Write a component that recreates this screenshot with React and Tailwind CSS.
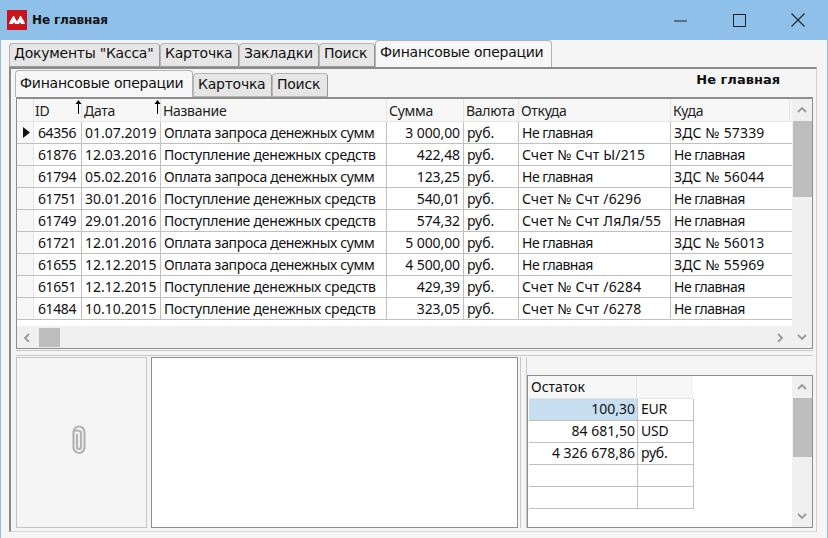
const rows = [
  ["64356", "01.07.2019", "Оплата запроса денежных сумм", "3 000,00", "руб.", "Не главная", "ЗДС № 57339"],
  ["61876", "12.03.2016", "Поступление денежных средств", "422,48", "руб.", "Счет № Счт Ы/215", "Не главная"],
  ["61794", "05.02.2016", "Оплата запроса денежных сумм", "123,25", "руб.", "Не главная", "ЗДС № 56044"],
  ["61751", "30.01.2016", "Поступление денежных средств", "540,01", "руб.", "Счет № Счт /6296", "Не главная"],
  ["61749", "29.01.2016", "Поступление денежных средств", "574,32", "руб.", "Счет № Счт ЛяЛя/55", "Не главная"],
  ["61721", "12.01.2016", "Оплата запроса денежных сумм", "5 000,00", "руб.", "Не главная", "ЗДС № 56013"],
  ["61655", "12.12.2015", "Оплата запроса денежных сумм", "4 500,00", "руб.", "Не главная", "ЗДС № 55969"],
  ["61651", "12.12.2015", "Поступление денежных средств", "429,39", "руб.", "Счет № Счт /6284", "Не главная"],
  ["61484", "10.10.2015", "Поступление денежных средств", "323,05", "руб.", "Счет № Счт /6278", "Не главная"],
];

const Chevron = ({ dir }) => {
  const d = { up: "M1 6 L5 2 L9 6", down: "M1 2 L5 6 L9 2", left: "M6 1 L2 5 L6 9", right: "M2 1 L6 5 L2 9" }[dir];
  return (
    <svg width="10" height="10" viewBox="0 0 10 8" className="block" fill="none" stroke="#9a9a9a" strokeWidth="1.8">
      <path d={d} />
    </svg>
  );
};

const VScroll = ({ thumb }) => (
  <div className="w-[20px] h-full shrink-0 bg-[#f0f0f0] flex flex-col items-center">
    <div className="h-[22px] shrink-0 w-full flex items-center justify-center"><Chevron dir="up" /></div>
    <div className={`${thumb} w-[19px] bg-[#bdbdbd] shrink-0`} />
    <div className="flex-1" />
    <div className="h-[22px] shrink-0 w-full flex items-center justify-center"><Chevron dir="down" /></div>
  </div>
);

const Tab = ({ label, w, active, inner }) => (
  <div
    className={`${w} shrink-0 box-border rounded-t-[4px] border border-[#b4b4b4] pl-[4px] flex items-center whitespace-nowrap text-[14px] tracking-[-0.25px] font-['DejaVu_Sans',sans-serif] ${
      inner ? "pb-[3px]" : "pb-[4px]"
    } ${
      active ? "bg-[#f7f7f7] h-[27px] border-b-0 z-10" : inner ? "bg-[#e6e6e6] h-[24px] border-r-[#999]" : "bg-[#e6e6e6] h-[24px] border-r-[#999] border-b-[#999]"
    }`}
  >
    {label}
  </div>
);

const H = ({ w, children, arrow }) => (
  <div className={`${w} shrink-0 box-border border-r border-[#e4e4e4] pl-[2px] pt-[3px] relative text-[#222] tracking-[-0.3px]`}>
    {children}
    {arrow && (
      <svg width="7" height="16" viewBox="0 0 7 16" className="absolute right-[-1px] top-0">
        <path d="M3.5 1 L6.5 5 L4 5 L4 15 L3 15 L3 5 L.5 5 Z" fill="#000" />
      </svg>
    )}
  </div>
);

const C = ({ w, right, children, pl = "pl-[3px]", tr = "" }) => (
  <div
    className={`${w} ${tr} shrink-0 box-border border-r border-[#c0c0c0] overflow-hidden whitespace-nowrap pt-[2px] ${
      right ? "text-right pr-[3px]" : pl
    }`}
  >
    {children}
  </div>
);

const wordTrack = (s) => (s === "Не главная" ? "tracking-[-0.5px]" : "tracking-[0.15px]");
const nameTrack = (s) => (s.startsWith("Оплата") ? "tracking-[-0.33px]" : "tracking-[-0.22px]");

export default function App() {
  return (
    <div className="w-[828px] h-[538px] overflow-hidden bg-[#8fc0ea] flex flex-col text-[14px] leading-[18px] text-[#111] font-['Noto_Sans',sans-serif]">
      <div className="h-[40px] shrink-0 flex items-center pl-[7px]">
        <div className="w-[20px] h-[20px] bg-[#c8141c] flex items-center justify-center">
          <svg width="18" height="10" viewBox="0 0 18 10">
            <path d="M1 9 L2 6 L4 3 L5 1 L6 1 L8 5 L9 6 L10 5 L12 1 L13 1 L14 3 L16 6 L17 9 L13 9 L12 7 L11 9 L7 9 L6 7 L5 9 Z" fill="#fff" />
          </svg>
        </div>
        <span className="ml-[5px] font-bold text-[12px] tracking-[-0.15px] font-['DejaVu_Sans',sans-serif]">Не главная</span>
        <div className="flex-1" />
        <svg width="13" height="13" viewBox="0 0 13 13" className="mr-[46px]"><path d="M0 7 H13" stroke="#222" strokeWidth="1" /></svg>
        <svg width="13" height="13" viewBox="0 0 13 13" className="mr-[45px]"><rect x=".5" y=".5" width="12" height="12" fill="none" stroke="#222" /></svg>
        <svg width="14" height="14" viewBox="0 0 14 14" className="mr-[23px]"><path d="M.5 .5 L13.5 13.5 M13.5 .5 L.5 13.5" stroke="#222" strokeWidth="1.1" /></svg>
      </div>

      <div className="flex-1 mx-[1px] bg-[#f5f5f5] flex flex-col pl-[8px] pr-[10px] pb-[6px] min-h-0">
        <div className="flex items-end h-[27px] shrink-0">
          <Tab w="w-[151px]" label='Документы "Касса"' />
          <Tab w="w-[79px]" label="Карточка" />
          <Tab w="w-[80px]" label="Закладки" />
          <Tab w="w-[56px]" label="Поиск" />
          <Tab w="w-[177px]" label="Финансовые операции" active />
        </div>

        <div className="flex-1 min-h-0 box-border border-t-2 border-l-2 border-[#8a8a8a] border-r border-r-[#d0d0d0] border-b border-b-[#d8d8d8] pl-[5px] pr-[3px] flex flex-col">
          <div className="flex items-end h-[28px] shrink-0 relative -ml-[1px]">
            <Tab w="w-[178px]" label="Финансовые операции" active inner />
            <Tab w="w-[79px]" label="Карточка" inner />
            <Tab w="w-[56px]" label="Поиск" inner />
            <div className="flex-1 self-start pt-[2px] pr-[33px] text-right font-bold text-[13px] font-['DejaVu_Sans',sans-serif]">Не главная</div>
          </div>

          <div className="h-[252px] shrink-0 box-border border border-t-2 border-[#8e8e8e] bg-white flex">
            <div className="flex-1 min-w-0 flex flex-col">
              <div className="h-[23px] shrink-0 flex bg-[#f7f7f7] border-b border-[#e4e4e4]">
                <H w="w-[17px]" />
                <H w="w-[48px]" arrow><span className="-ml-[1px]">ID</span></H>
                <H w="w-[79px]" arrow>Дата</H>
                <H w="w-[226px]">Название</H>
                <H w="w-[77px]">Сумма</H>
                <H w="w-[55px]">Валюта</H>
                <H w="w-[152px]">Откуда</H>
                <H w="w-[119px]">Куда</H>
              </div>
              {rows.map((r, i) => (
                <div key={r[0]} className="h-[22px] shrink-0 flex border-b border-[#c0c0c0]">
                  <div className="w-[17px] shrink-0 bg-[#f7f7f7] border-r border-[#e4e4e4] flex items-center pl-[6px]">
                    {i === 0 && (
                      <svg width="7" height="11" viewBox="0 0 7 11"><path d="M0 0 L7 5.5 L0 11 Z" fill="#111" /></svg>
                    )}
                  </div>
                  <C w="w-[48px]" pl="pl-[4px]" tr="tracking-[-0.4px]">{r[0]}</C>
                  <C w="w-[79px]">{r[1]}</C>
                  <C w="w-[226px]" tr={nameTrack(r[2])}>{r[2]}</C>
                  <C w="w-[77px]" right tr="tracking-[-0.1px]">{r[3]}</C>
                  <C w="w-[55px]">{r[4]}</C>
                  <C w="w-[152px]" tr={wordTrack(r[5])}>{r[5]}</C>
                  <div className={`${wordTrack(r[6])} w-[119px] shrink-0 pl-[3px] pt-[2px] whitespace-nowrap`}>{r[6]}</div>
                </div>
              ))}
              <div className="flex-1" />
              <div className="h-[22px] shrink-0 bg-[#f0f0f0] flex items-center">
                <div className="w-[22px] shrink-0 flex justify-center"><Chevron dir="left" /></div>
                <div className="w-[21px] h-[19px] bg-[#bdbdbd] shrink-0" />
                <div className="flex-1" />
                <div className="w-[22px] shrink-0 flex justify-center"><Chevron dir="right" /></div>
              </div>
            </div>
            <VScroll thumb="h-[76px]" />
          </div>

          <div className="h-[6px] shrink-0 box-border border-t border-b border-[#c8c8c8] my-[1px]" />

          <div className="flex-1 min-h-0 flex pb-[3px]">
            <div className="w-[131px] shrink-0 box-border border border-[#c4c4c4] flex items-center justify-center pb-[6px] pr-[6px]">
              <svg width="16" height="30" viewBox="0 0 16 30" fill="none" stroke="#b4b4b4" strokeWidth="2.2" className="blur-[0.4px]">
                <path d="M6 9 V22 A2 2 0 0 0 10 22 V7 A5.5 5.5 0 0 0 2.5 7 V22 A5.5 6 0 0 0 13.5 22 V7 A5.5 5.5 0 0 0 2.5 7" />
              </svg>
            </div>
            <div className="w-[367px] shrink-0 ml-[4px] box-border border border-[#8e8e8e] bg-white" />
            <div className="w-[7px] shrink-0 ml-[2px] box-border border-l border-r border-[#c8c8c8]" />
            <div className="flex-1 min-w-0 flex flex-col">
              <div className="h-[18px] shrink-0" />
              <div className="flex-1 min-h-0 box-border border border-[#8e8e8e] bg-white flex">
                <div className="flex-1 min-w-0 pl-[1px]">
                  <div className="h-[23px] flex w-[164px] bg-[#f7f7f7] border-b border-[#e4e4e4]">
                    <div className="w-[108px] border-r border-[#e4e4e4] pl-[2px] pt-[2px]">Остаток</div>
                  </div>
                  {[["100,30", "EUR"], ["84 681,50", "USD"], ["4 326 678,86", "руб."], ["", ""], ["", ""]].map((r, i) => (
                    <div key={i} className="h-[22px] flex w-[165px] border-b border-r border-[#c0c0c0]">
                      <div className={`w-[109px] shrink-0 box-border border-r border-[#c0c0c0] text-right pr-[2px] pt-[1px] ${i === 0 ? "bg-[#c8dff2]" : ""}`}>{r[0]}</div>
                      <div className="pl-[3px] pt-[1px] tracking-[-0.2px]">{r[1]}</div>
                    </div>
                  ))}
                </div>
                <VScroll thumb="h-[59px]" />
              </div>
            </div>
          </div>
        </div>
      </div>
    </div>
  );
}
